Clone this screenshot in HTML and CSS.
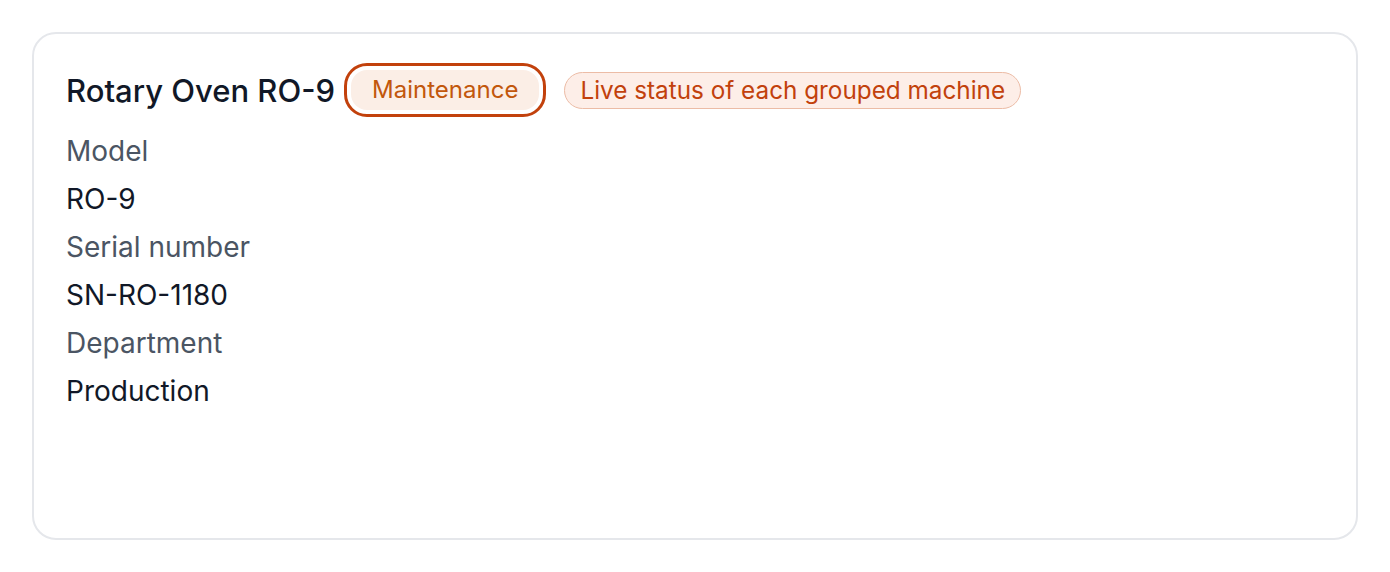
FILE: index.html
```html
<!DOCTYPE html>
<html lang="en">
  <head>
    <meta charset="UTF-8" />
    <meta name="viewport" content="width=device-width, initial-scale=1.0" />
    <title>Rotary Oven RO-9</title>
    <link rel="stylesheet" href="styles.css">
  </head>
  <body>
    <div class="machine-card">
      <div class="card-header">
        <h2 class="machine-name">Rotary Oven RO-9</h2>
        <button class="status-badge">Maintenance</button>
        <span class="hint-pill">Live status of each grouped machine</span>
      </div>
      <dl class="machine-details">
        <dt>Model</dt>
        <dd>RO-9</dd>
        <dt>Serial number</dt>
        <dd>SN-RO-1180</dd>
        <dt>Department</dt>
        <dd>Production</dd>
      </dl>
    </div>
  </body>
</html>
```

FILE: styles.css
```css
body {
  font-family: Inter, "Noto Sans", sans-serif;
  margin: 0;
  padding: 32px;
  background-color: #ffffff;
  color: #111827;
}

.machine-card {
  box-sizing: border-box;
  min-height: calc(100vh - 64px);
  border: 2px solid #e5e7eb;
  border-radius: 24px;
  padding: 32px;
}

.card-header {
  display: flex;
  align-items: center;
  gap: 16px;
  height: 48px;
  margin-bottom: 13px;
}

.machine-name {
  margin: 0;
  font-size: 31px;
  font-weight: 500;
  color: #111827;
}

.status-badge {
  font-family: inherit;
  font-size: 24px;
  line-height: 28px;
  color: #c2570c;
  background-color: #fbeee6;
  border: none;
  padding: 6px 21px;
  outline: 3px solid #c2410c;
  outline-offset: 4px;
  border-radius: 16px;
}

.hint-pill {
  font-size: 24.3px;
  line-height: 29px;
  color: #c2410c;
  background-color: #fdeee8;
  border: 1.5px solid #ecbca6;
  border-radius: 999px;
  padding: 3px 15px;
  margin-left: 9px;
}

.machine-details {
  margin: 0;
}

.machine-details dt {
  font-size: 28px;
  line-height: 48px;
  color: #4b5563;
}

.machine-details dd {
  margin: 0;
  font-size: 28px;
  line-height: 48px;
  color: #111827;
}
```
